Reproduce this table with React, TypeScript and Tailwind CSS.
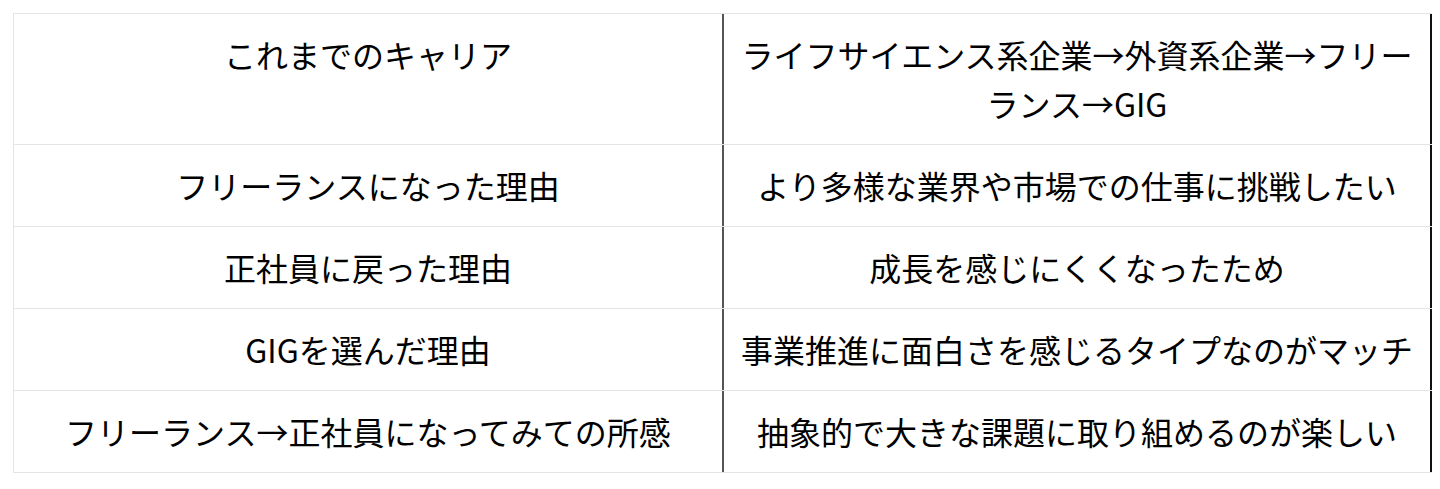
const rows: { label: string; value: string }[] = [
  {
    label: "これまでのキャリア",
    value: "ライフサイエンス系企業→外資系企業→フリーランス→GIG",
  },
  {
    label: "フリーランスになった理由",
    value: "より多様な業界や市場での仕事に挑戦したい",
  },
  { label: "正社員に戻った理由", value: "成長を感じにくくなったため" },
  {
    label: "GIGを選んだ理由",
    value: "事業推進に面白さを感じるタイプなのがマッチ",
  },
  {
    label: "フリーランス→正社員になってみての所感",
    value: "抽象的で大きな課題に取り組めるのが楽しい",
  },
];

const App = () => {
  return (
    <div
      className="min-h-[489px] bg-white pt-[13px] pl-[13px]"
      style={{ fontFamily: '"Noto Sans CJK JP", "Noto Sans", sans-serif' }}
    >
      <div className="w-[1419px] border-t border-l border-[#e4e4e4] text-[32px] leading-[49px] font-normal text-black">
        {rows.map((r) => (
          <div
            key={r.label}
            className="grid grid-cols-[710px_708px] border-b border-[#e4e4e4]"
          >
            <div className="border-r-2 border-[#555] px-4 py-4 text-center">
              {r.label}
            </div>
            <div className="border-r-2 border-[#111] px-4 py-4 text-center">
              {r.value}
            </div>
          </div>
        ))}
      </div>
    </div>
  );
};

export default App;
